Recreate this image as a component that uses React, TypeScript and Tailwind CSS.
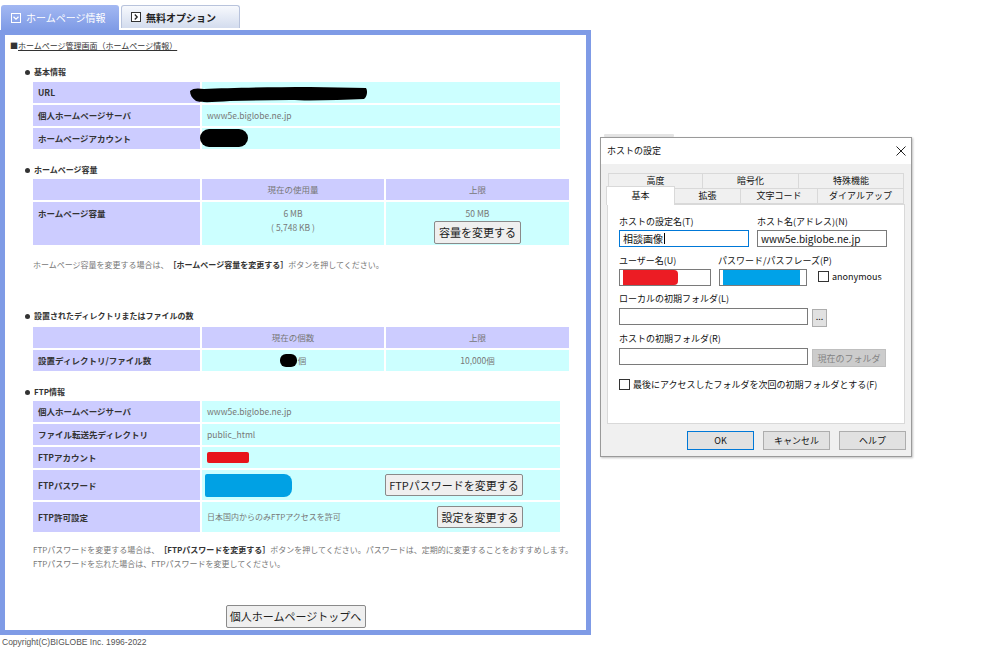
import type { ReactNode } from 'react'

function Heading({ children, className = '' }: { children: ReactNode; className?: string }) {
  return (
    <div className={`flex items-center gap-[4px] pl-[20px] text-[8px] font-bold leading-[12px] text-[#333] ${className}`}>
      <div className="h-[5px] w-[5px] rounded-full bg-[#333]" />
      {children}
    </div>
  )
}

function InfoRow({ label, children, tall }: { label: string; children?: ReactNode; tall?: boolean }) {
  return (
    <div className={`relative flex gap-[2px] ${tall ? 'h-[30px]' : 'h-[21px]'}`}>
      <div className="flex w-[167px] items-center bg-[#ccccff] pl-[5px] text-[8.5px] font-bold text-[#333]">{label}</div>
      <div className="flex w-[358px] items-center bg-[#ccffff] pl-[5px] text-[8.5px] text-[#777]">{children}</div>
    </div>
  )
}

function PageButton({ children, className = '' }: { children: ReactNode; className?: string }) {
  return (
    <div
      className={`flex items-center justify-center rounded-[2px] border border-[#8a8a8a] bg-[#efefef] text-[10.5px] leading-none text-[#222] ${className}`}
    >
      {children}
    </div>
  )
}

function HomepagePanel() {
  return (
    <div className="w-[591px]">
      {/* tabs */}
      <div className="flex h-[30px] items-start gap-[2px] pl-[1px] pt-[5px]">
        <div className="flex h-[25px] w-[118px] items-center gap-[5px] rounded-t-[3px] bg-linear-to-b from-[#a3b8f2] to-[#7f9be6] pl-[10px] text-[10px] text-white">
          <svg width="10" height="10" viewBox="0 0 10 10">
            <rect x="0.5" y="0.5" width="9" height="9" fill="none" stroke="white" />
            <path d="M2.5 3.8 L5 6.2 L7.5 3.8" fill="none" stroke="white" strokeWidth="1.3" />
          </svg>
          ホームページ情報
        </div>
        <div className="flex h-[23px] w-[119px] items-center gap-[5px] rounded-t-[3px] border border-b-0 border-[#b8c3dc] bg-linear-to-b from-[#f7f9fd] to-[#d3dcee] pl-[9px] text-[10px] font-bold text-[#222]">
          <svg width="10" height="10" viewBox="0 0 10 10">
            <rect x="0.5" y="0.5" width="9" height="9" fill="white" stroke="#333" />
            <path d="M3.8 2.5 L6.2 5 L3.8 7.5" fill="none" stroke="#222" strokeWidth="1.3" />
          </svg>
          無料オプション
        </div>
      </div>

      {/* panel */}
      <div className="h-[605px] w-[591px] border-[5px] border-[#7f9be6] bg-white">
        <div className="pl-[5px] pt-[5px] text-[8px] leading-[12px] text-[#333]">
          ■<span className="underline">ホームページ管理画面（ホームページ情報）</span>
        </div>

        <Heading className="mt-[14px]">基本情報</Heading>
        <div className="ml-[28px] mt-[4px] flex flex-col gap-[2px]">
          <InfoRow label="URL">
            <svg className="absolute left-[157px] top-[3px]" width="178" height="19" viewBox="0 0 178 19">
              <path
                d="M0 6 C3 3 8 3 14 4 C40 3 80 2 120 2 L176 3 C178 6 177 12 174 14 C150 15 120 16 100 15 L40 16 C25 17 12 18 6 16 C2 13 0 10 0 6 Z"
                fill="#000"
              />
            </svg>
          </InfoRow>
          <InfoRow label="個人ホームページサーバ">www5e.biglobe.ne.jp</InfoRow>
          <InfoRow label="ホームページアカウント">
            <div className="absolute left-[167px] top-[1px] h-[18px] w-[48px] rounded-[9px] bg-black" />
          </InfoRow>
        </div>

        <Heading className="mt-[15px]">ホームページ容量</Heading>
        <div className="ml-[28px] mt-[3px] flex flex-col gap-[2px] text-[8.5px]">
          <div className="flex h-[21px] gap-[2px]">
            <div className="w-[167px] bg-[#ccccff]" />
            <div className="flex w-[182px] items-center justify-center bg-[#ccccff] text-[#777]">現在の使用量</div>
            <div className="flex w-[183px] items-center justify-center bg-[#ccccff] text-[#777]">上限</div>
          </div>
          <div className="flex h-[43px] gap-[2px]">
            <div className="w-[167px] bg-[#ccccff] pl-[5px] pt-[4px] font-bold leading-[14px] text-[#333]">ホームページ容量</div>
            <div className="flex w-[182px] flex-col items-center bg-[#ccffff] pt-[4px] leading-[14px] text-[#777]">
              <div>6 MB</div>
              <div>( 5,748 KB )</div>
            </div>
            <div className="flex w-[183px] flex-col items-center bg-[#ccffff] pt-[4px] leading-[14px] text-[#777]">
              <div>50 MB</div>
              <PageButton className="mt-[1px] h-[23px] w-[87px] text-[11px]">容量を変更する</PageButton>
            </div>
          </div>
        </div>

        <div className="ml-[28px] mt-[14px] text-[8px] leading-[12px] text-[#777]">
          ホームページ容量を変更する場合は、
          <span className="font-bold text-[#333]">［ホームページ容量を変更する］</span>
          ボタンを押してください。
        </div>

        <Heading className="mt-[39px]">設置されたディレクトリまたはファイルの数</Heading>
        <div className="ml-[28px] mt-[5px] flex flex-col gap-[2px] text-[8.5px]">
          <div className="flex h-[21px] gap-[2px]">
            <div className="w-[167px] bg-[#ccccff]" />
            <div className="flex w-[182px] items-center justify-center bg-[#ccccff] text-[#777]">現在の個数</div>
            <div className="flex w-[183px] items-center justify-center bg-[#ccccff] text-[#777]">上限</div>
          </div>
          <div className="flex h-[21px] gap-[2px]">
            <div className="flex w-[167px] items-center bg-[#ccccff] pl-[5px] font-bold text-[#333]">設置ディレクトリ/ファイル数</div>
            <div className="flex w-[182px] items-center justify-center bg-[#ccffff] text-[#777]">
              <div className="mr-[1px] h-[13px] w-[17px] rounded-[6px] bg-black" />個
            </div>
            <div className="flex w-[183px] items-center justify-center bg-[#ccffff] text-[#777]">10,000個</div>
          </div>
        </div>

        <Heading className="mt-[15px]">FTP情報</Heading>
        <div className="ml-[28px] mt-[3px] flex flex-col gap-[2px]">
          <InfoRow label="個人ホームページサーバ">www5e.biglobe.ne.jp</InfoRow>
          <InfoRow label="ファイル転送先ディレクトリ">public_html</InfoRow>
          <InfoRow label="FTPアカウント">
            <div className="h-[11px] w-[42px] rounded-[2px] bg-[#e8141c]" />
          </InfoRow>
          <InfoRow label="FTPパスワード" tall>
            <div className="flex w-full items-center justify-between pr-[37px]">
              <div className="-ml-[2px] h-[23px] w-[87px] rounded-r-[8px] rounded-l-[2px] bg-[#00a1e4]" />
              <PageButton className="h-[22px] w-[138px] text-[11px]">FTPパスワードを変更する</PageButton>
            </div>
          </InfoRow>
          <InfoRow label="FTP許可設定" tall>
            <div className="flex w-full items-center justify-between pr-[37px] text-[8px]">
              <span>日本国内からのみFTPアクセスを許可</span>
              <PageButton className="h-[22px] w-[86px] text-[11px]">設定を変更する</PageButton>
            </div>
          </InfoRow>
        </div>

        <div className="ml-[28px] mt-[11px] text-[8px] leading-[14px] text-[#777]">
          <div>
            FTPパスワードを変更する場合は、
            <span className="font-bold text-[#333]">［FTPパスワードを変更する］</span>
            ボタンを押してください。パスワードは、定期的に変更することをおすすめします。
          </div>
          <div>FTPパスワードを忘れた場合は、FTPパスワードを変更してください。</div>
        </div>

        <div className="mt-[34px] flex justify-center">
          <PageButton className="h-[23px] w-[140px] text-[11px]">個人ホームページトップへ</PageButton>
        </div>
      </div>

      <div className="pl-[2px] pt-[1px] font-['Liberation_Sans',sans-serif] text-[8.5px] leading-[12px] text-[#555]">
        Copyright(C)BIGLOBE Inc. 1996-2022
      </div>
    </div>
  )
}

function TextBox({ className = '', children }: { className?: string; children?: ReactNode }) {
  return (
    <div className={`flex h-[17px] items-center overflow-hidden border bg-white px-[3px] text-[10px] text-[#111] ${className}`}>
      {children}
    </div>
  )
}

function WinButton({ children, className = '' }: { children: ReactNode; className?: string }) {
  return (
    <div className={`flex items-center justify-center border text-[9px] leading-none ${className}`}>{children}</div>
  )
}

function HostDialog() {
  return (
    <div className="absolute left-[600px] top-[137px] h-[320px] w-[312px] border border-[#9a9a9a] bg-[#f0f0f0] font-['Noto_Sans_CJK_JP',sans-serif] text-[9px] text-[#111] shadow-[1px_1px_2px_rgba(0,0,0,0.25)]">
      <div className="flex h-[26px] items-center justify-between bg-white pl-[6px] pr-[5px]">
        <span className="text-[9px]">ホストの設定</span>
        <svg width="10" height="10" viewBox="0 0 10 10">
          <path d="M0.5 0.5 L9.5 9.5 M9.5 0.5 L0.5 9.5" stroke="#222" strokeWidth="1" />
        </svg>
      </div>

      <div className="px-[5px] pt-[9px]">
        <div className="ml-[2px] flex h-[15px]">
          <div className="flex w-[95px] items-center justify-center border border-b-0 border-[#d9d9d9] bg-[#f0f0f0]">高度</div>
          <div className="flex w-[96px] items-center justify-center border border-b-0 border-l-0 border-[#d9d9d9] bg-[#f0f0f0]">暗号化</div>
          <div className="flex w-[105px] items-center justify-center border border-b-0 border-l-0 border-[#d9d9d9] bg-[#f0f0f0]">特殊機能</div>
        </div>
        <div className="relative z-10 flex h-[16px] items-end">
          <div className="-mb-px -mt-[2px] flex h-[19px] w-[69px] items-center justify-center border border-b-0 border-[#d9d9d9] bg-white">基本</div>
          <div className="flex h-[16px] w-[66px] items-center justify-center border border-l-0 border-[#d9d9d9] bg-[#f0f0f0]">拡張</div>
          <div className="flex h-[16px] w-[77px] items-center justify-center border border-l-0 border-[#d9d9d9] bg-[#f0f0f0]">文字コード</div>
          <div className="flex h-[16px] w-[86px] items-center justify-center border border-l-0 border-[#d9d9d9] bg-[#f0f0f0]">ダイアルアップ</div>
        </div>

        <div className="ml-[1px] h-[220px] w-[298px] border border-[#d9d9d9] bg-white px-[11px] pt-[11px]">
          <div className="flex gap-[8px]">
            <div className="w-[130px]">
              <div className="leading-[12px]">ホストの設定名(T)</div>
              <TextBox className="mt-[2px] w-[130px] border-[#0078d7]">
                相談画像<span className="ml-[1px] h-[11px] w-px bg-black" />
              </TextBox>
            </div>
            <div className="w-[130px]">
              <div className="leading-[12px]">ホスト名(アドレス)(N)</div>
              <TextBox className="mt-[2px] w-[130px] border-[#7a7a7a]">www5e.biglobe.ne.jp</TextBox>
            </div>
          </div>

          <div className="mt-[8px] flex items-end">
            <div className="w-[92px]">
              <div className="leading-[12px]">ユーザー名(U)</div>
              <TextBox className="mt-[2px] w-[92px] border-[#7a7a7a] px-0">
                <div className="h-[15px] w-[55px] rounded-r-[4px] bg-[#ec1c24]" />
              </TextBox>
            </div>
            <div className="ml-[8px] w-[88px]">
              <div className="-ml-[1px] whitespace-nowrap leading-[12px]">パスワード/パスフレーズ(P)</div>
              <TextBox className="mt-[2px] w-[88px] border-[#7a7a7a] px-0">
                <div className="h-[15px] w-[77px] bg-[#00a2e8]" />
              </TextBox>
            </div>
            <div className="mb-[3px] ml-[11px] flex items-center gap-[3px]">
              <div className="h-[11px] w-[11px] border border-[#333] bg-white" />
              <span className="text-[9px]">anonymous</span>
            </div>
          </div>

          <div className="mt-[7px] leading-[12px]">ローカルの初期フォルダ(L)</div>
          <div className="mt-[3px] flex items-start gap-[4px]">
            <TextBox className="w-[189px] border-[#7a7a7a]" />
            <WinButton className="mt-[1px] h-[18px] w-[15px] border-[#adadad] bg-[#e1e1e1] pb-[4px]">...</WinButton>
          </div>

          <div className="mt-[6px] leading-[12px]">ホストの初期フォルダ(R)</div>
          <div className="mt-[3px] flex items-start gap-[4px]">
            <TextBox className="w-[189px] border-[#7a7a7a]" />
            <WinButton className="mt-[1px] h-[18px] w-[74px] border-[#bfbfbf] bg-[#cccccc] text-[#838383]">現在のフォルダ</WinButton>
          </div>

          <div className="mt-[11px] flex items-center gap-[3px]">
            <div className="h-[11px] w-[11px] border border-[#333] bg-white" />
            <span>最後にアクセスしたフォルダを次回の初期フォルダとする(F)</span>
          </div>
        </div>

        <div className="mt-[7px] flex justify-end gap-[9px]">
          <WinButton className="h-[19px] w-[67px] border-[#0078d7] bg-[#e1e1e1]">OK</WinButton>
          <WinButton className="h-[19px] w-[67px] border-[#adadad] bg-[#e1e1e1]">キャンセル</WinButton>
          <WinButton className="h-[19px] w-[67px] border-[#adadad] bg-[#e1e1e1]">ヘルプ</WinButton>
        </div>
      </div>
    </div>
  )
}

export default function App() {
  return (
    <div className="relative h-[656px] w-[999px] overflow-hidden bg-white font-['Noto_Sans_CJK_JP','Noto_Sans',sans-serif]">
      <HomepagePanel />
      {/* edge of the window behind the dialog */}
      <div className="absolute left-[604px] top-[134px] h-[3px] w-[70px] rounded-[1px] bg-[#e4e4e4]" />
      <HostDialog />
    </div>
  )
}
